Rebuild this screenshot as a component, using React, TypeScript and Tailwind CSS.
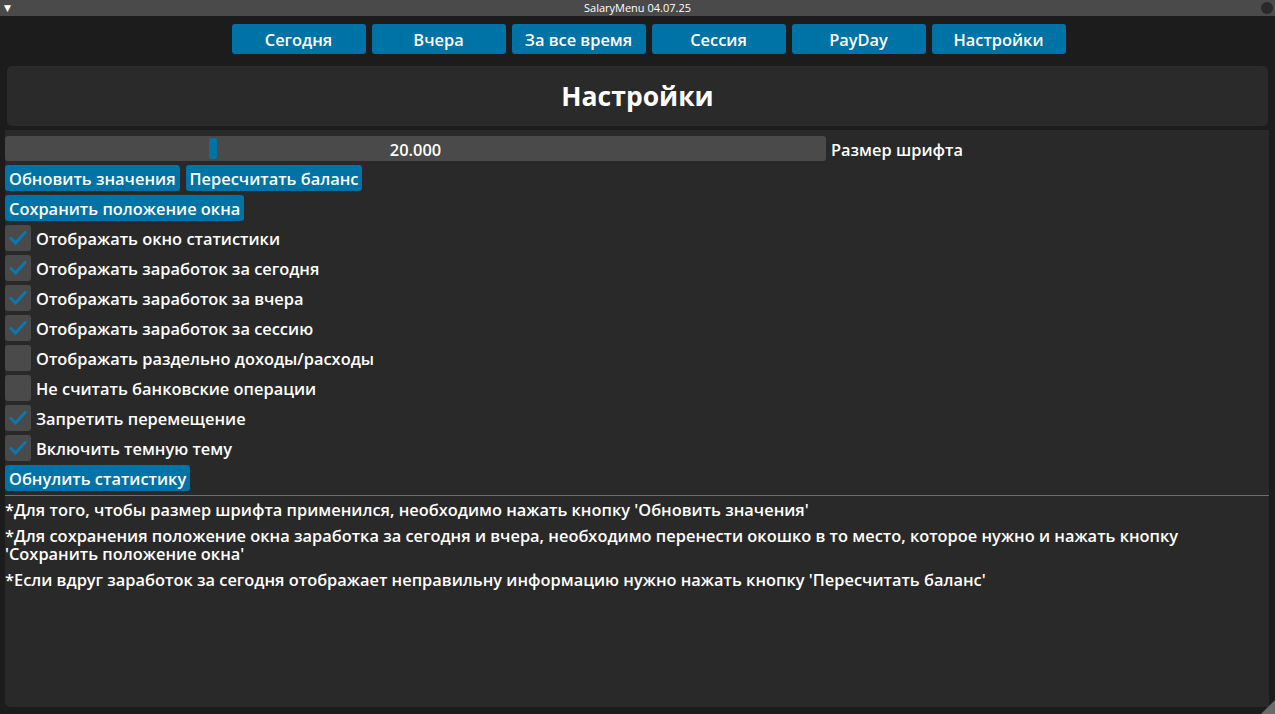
import { useState } from "react";

const TABS = ["Сегодня", "Вчера", "За все время", "Сессия", "PayDay", "Настройки"];

const OPTIONS: [string, boolean][] = [
  ["Отображать окно статистики", true],
  ["Отображать заработок за сегодня", true],
  ["Отображать заработок за вчера", true],
  ["Отображать заработок за сессию", true],
  ["Отображать раздельно доходы/расходы", false],
  ["Не считать банковские операции", false],
  ["Запретить перемещение", true],
  ["Включить темную тему", true],
];

function Btn({ children }: { children: string }) {
  return (
    <button className="h-[26px] rounded-[3px] bg-[#0073a6] px-[4px] pt-[2px] text-left leading-[24px] text-white">
      {children}
    </button>
  );
}

function Check({ label, initial }: { label: string; initial: boolean }) {
  const [on, setOn] = useState(initial);
  return (
    <label className="flex h-[26px] cursor-pointer items-center gap-[5px]" onClick={() => setOn(!on)}>
      <span className="flex h-[26px] w-[26px] items-center justify-center rounded-[3px] bg-[#4a4a4a]">
        {on && (
          <svg width="18" height="18" viewBox="0 0 18 18">
            <path d="M2 9.5 L6.5 14 L16 3.5" fill="none" stroke="#0a78b0" strokeWidth="3" strokeLinecap="square" />
          </svg>
        )}
      </span>
      <span className="pt-[3px]">{label}</span>
    </label>
  );
}

export default function App() {
  const [tab, setTab] = useState("Настройки");
  return (
    <div
      className="flex h-[714px] w-[1275px] flex-col overflow-hidden bg-[#1c1c1c] text-[16.4px] font-semibold text-white"
      style={{ fontFamily: '"Open Sans", "DejaVu Sans", sans-serif' }}
    >
      {/* title bar */}
      <div className="relative flex h-4 shrink-0 items-center justify-center bg-[#4a4a4a] text-[11px] font-normal">
        <span className="absolute left-[4px] top-[3px] text-[9px] leading-none">▼</span>
        <span>SalaryMenu 04.07.25</span>
        <span className="absolute right-[2px] top-[2px] h-[12px] w-[12px] rounded-full bg-[#2a2a2a]" />
      </div>

      {/* tabs */}
      <div className="mt-2 flex justify-center gap-[6px] pl-[22px]">
        {TABS.map((t) => (
          <button
            key={t}
            onClick={() => setTab(t)}
            className={`h-[30px] w-[134px] rounded-[3px] pt-[2px] ${t === tab ? "bg-[#0073a6]" : "bg-[#0073a6]"}`}
          >
            {t}
          </button>
        ))}
      </div>

      {/* header panel */}
      <div className="mx-[7px] mt-3 flex h-[60px] shrink-0 items-center justify-center rounded-[5px] bg-[#2a2a2a] pt-[2px] text-[26.5px] font-bold">
        Настройки
      </div>

      {/* content */}
      <div className="mb-[7px] ml-[5px] mr-[6px] mt-1 flex flex-1 flex-col gap-1 rounded-bl-[5px] bg-[#292929] pt-[6px]">
        <div className="flex h-[25px] items-center gap-[5px]">
          <div className="relative flex h-[25px] w-[821px] items-center justify-center rounded-[3px] bg-[#4a4a4a] pt-[3px]">
            <span className="absolute left-[204px] top-[2px] h-[21px] w-[8px] rounded-[2px] bg-[#0073a6]" />
            <span className="relative">20.000</span>
          </div>
          <span className="pt-[3px]">Размер шрифта</span>
        </div>
        <div className="flex gap-[6px]">
          <Btn>Обновить значения</Btn>
          <Btn>Пересчитать баланс</Btn>
        </div>
        <div className="flex">
          <Btn>Сохранить положение окна</Btn>
        </div>
        {OPTIONS.map(([label, on]) => (
          <Check key={label} label={label} initial={on} />
        ))}
        <div className="flex">
          <Btn>Обнулить статистику</Btn>
        </div>
        <div className="h-px bg-[#6e6e6e]" />
        <div className="mt-px flex flex-col gap-2 pr-2 leading-[18px]">
          <p>*Для того, чтобы размер шрифта применился, необходимо нажать кнопку 'Обновить значения'</p>
          <p>
            *Для сохранения положение окна заработка за сегодня и вчера, необходимо перенести окошко в то место, которое нужно и нажать кнопку 'Сохранить положение окна'
          </p>
          <p>*Если вдруг заработок за сегодня отображает неправильну информацию нужно нажать кнопку 'Пересчитать баланс'</p>
        </div>
        <div className="relative mt-auto h-0">
          <span className="absolute bottom-[-7px] right-[-6px] h-0 w-0 border-b-[14px] border-l-[14px] border-b-[#6a6a6a] border-l-transparent" />
        </div>
      </div>
    </div>
  );
}
